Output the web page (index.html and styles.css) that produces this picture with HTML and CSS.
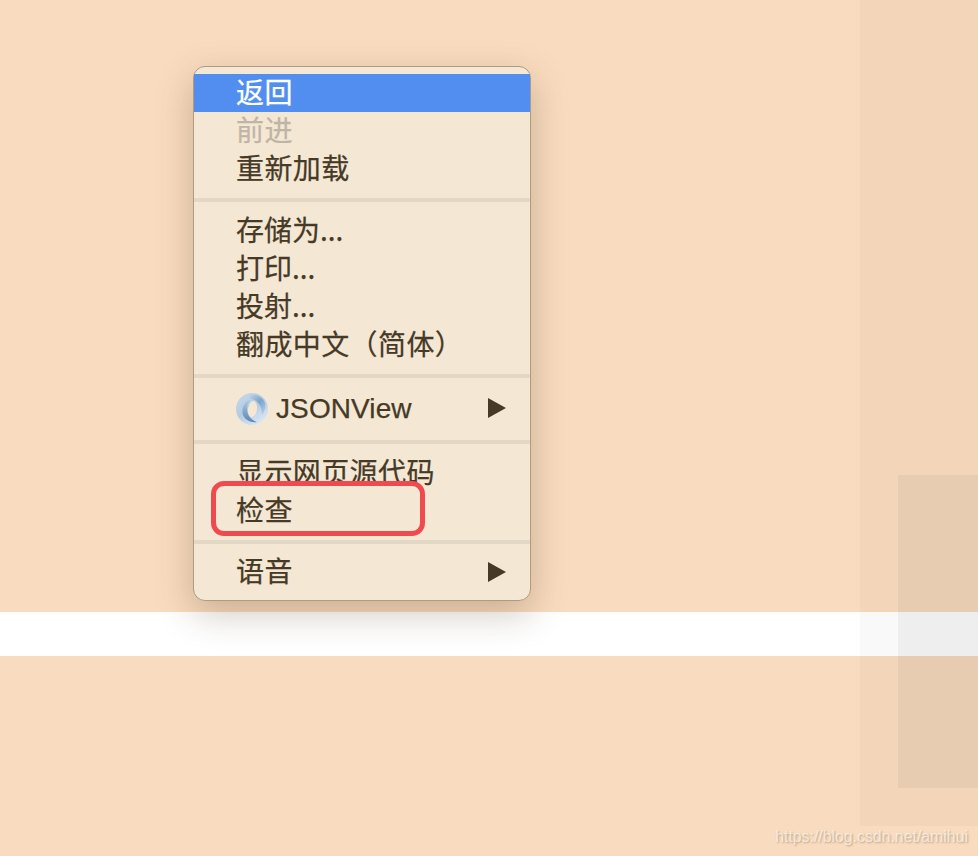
FILE: index.html
```html
<!DOCTYPE html>
<html lang="zh">
<head>
    <meta charset="UTF-8">
    <title>检查</title>
    <link rel="stylesheet" href="styles.css">
</head>
<body>

    <!-- Page behind the menu -->
    <div class="page">
        <div class="page-top"></div>
        <div class="band"></div>
        <div class="page-bottom"></div>
    </div>

    <!-- Translucent strips on the right -->
    <div class="strip"></div>
    <div class="panel"></div>

    <!-- Context menu -->
    <div class="menu">
        <div class="item active">返回</div>
        <div class="item disabled">前进</div>
        <div class="item">重新加载</div>
        <div class="sep sep-a"></div>
        <div class="item item-dots">存储为...</div>
        <div class="item item-dots">打印...</div>
        <div class="item item-dots">投射...</div>
        <div class="item">翻成中文（简体）</div>
        <div class="sep sep-b"></div>
        <div class="item item-sub">
            <svg class="ext-icon" viewBox="0 0 32 32" aria-hidden="true">
                <defs>
                    <linearGradient id="ringBase" x1="0.1" y1="0" x2="0.8" y2="1">
                        <stop offset="0" stop-color="#c4d8ea"/>
                        <stop offset="0.5" stop-color="#b3cbe3"/>
                        <stop offset="1" stop-color="#e2ebf4"/>
                    </linearGradient>
                    <linearGradient id="swirlLeft" x1="0.5" y1="0" x2="0.5" y2="1">
                        <stop offset="0" stop-color="#b3cbe3"/>
                        <stop offset="0.6" stop-color="#7ca0c5"/>
                        <stop offset="1" stop-color="#5d88b2"/>
                    </linearGradient>
                    <linearGradient id="swirlRight" x1="0" y1="0" x2="0.8" y2="1">
                        <stop offset="0" stop-color="#cbdced"/>
                        <stop offset="0.55" stop-color="#7da3c8"/>
                        <stop offset="1" stop-color="#b3cbe3"/>
                    </linearGradient>
                </defs>
                <circle cx="16" cy="16" r="16" fill="url(#ringBase)"/>
                <path d="M13 7C8 10 5 16 7 22C9 27 15 30 21 29C15 27 11 22 11 16C11 12 12 9 15 7Z" fill="url(#swirlLeft)"/>
                <path d="M11 2C18 0 26 3 29 10C30 14 29 18 26 22C26 14 23 8 16 6C14 5 12 4 11 2Z" fill="url(#swirlRight)"/>
                <ellipse cx="16.500" cy="16" rx="4.500" ry="8" transform="rotate(8 16.500 16)" fill="#f4e8d5"/>
            </svg>
            <span class="ext-name">JSONView</span>
            <span class="arrow"></span>
        </div>
        <div class="sep sep-c"></div>
        <div class="item">显示网页源代码</div>
        <div class="item">检查</div>
        <div class="sep sep-d"></div>
        <div class="item item-sub">
            <span class="sub-name">语音</span>
            <span class="arrow"></span>
        </div>
    </div>

    <!-- Red marker drawn over the screenshot -->
    <div class="marker"></div>

    <div class="watermark">https://blog.csdn.net/amihui</div>

</body>
</html>
```

FILE: styles.css
```css
html, body {
    margin: 0;
    padding: 0;
    height: 100%;
}
body {
    position: relative;
    width: 978px;
    height: 856px;
    overflow: hidden;
    background-color: #f9dcbf;
    font-family: "Noto Sans CJK SC", "Noto Sans", sans-serif;
}
.page {
    display: flex;
    flex-direction: column;
    height: 100%;
}
.page-top {
    height: 612px;
}
.band {
    height: 44px;
    background-color: #fff;
}
.page-bottom {
    flex: 1;
}
.strip {
    position: absolute;
    top: 0;
    right: 0;
    width: 118px;
    height: 826px;
    background-color: rgba(0, 0, 0, 0.022);
}
.panel {
    position: absolute;
    top: 475px;
    right: 0;
    width: 80px;
    height: 313px;
    background-color: rgba(0, 0, 0, 0.045);
}
.menu {
    position: absolute;
    top: 66px;
    left: 193px;
    box-sizing: border-box;
    width: 338px;
    height: 535px;
    padding: 7px 0 8px;
    background-color: #f4e8d5;
    border: 1px solid #b09a82;
    border-radius: 12px;
    box-shadow: 0 12px 36px rgba(80, 55, 30, 0.28);
    color: #463a27;
    font-size: 28px;
    letter-spacing: 0.4px;
    -webkit-text-stroke: 0.25px currentColor;
}
.item {
    display: flex;
    align-items: center;
    box-sizing: border-box;
    height: 38px;
    padding: 0 24px 4px 42px;
    line-height: 38px;
    white-space: nowrap;
}
.item.active {
    background-color: #528df0;
    color: #fff;
}
.item.disabled {
    color: #bfb5a6;
}
.item-dots {
    letter-spacing: 0;
}
.item-sub {
    padding-bottom: 0;
}
.sub-name {
    margin-bottom: 4px;
}
.sep {
    height: 4px;
    background-color: #e3d8c6;
}
.sep-a {
    margin: 10px 0;
}
.sep-b {
    margin: 10px 0 11px;
}
.sep-c {
    margin: 13px 0 10px;
}
.sep-d {
    margin: 10px 0 9px;
}
.ext-name {
    margin: 2px 0 0 8px;
    font-family: "Liberation Sans", sans-serif;
    letter-spacing: 0.1px;
}
.ext-icon {
    width: 32px;
    height: 32px;
    margin-top: 2px;
    flex: none;
}
.arrow {
    margin-left: auto;
    width: 0;
    height: 0;
    border-left: 18px solid #463a27;
    border-top: 10px solid transparent;
    border-bottom: 10px solid transparent;
}
.marker {
    position: absolute;
    top: 481px;
    left: 211px;
    box-sizing: border-box;
    width: 214px;
    height: 55px;
    border: 5px solid #ef4b4e;
    border-radius: 13px;
}
.watermark {
    position: absolute;
    right: 10px;
    bottom: 8px;
    font-family: "Liberation Sans", sans-serif;
    font-size: 16px;
    letter-spacing: -0.07px;
    line-height: 22px;
    color: rgba(255, 255, 255, 0.62);
    text-shadow: 1px 1px 2px rgba(120, 90, 60, 0.45);
}
```
